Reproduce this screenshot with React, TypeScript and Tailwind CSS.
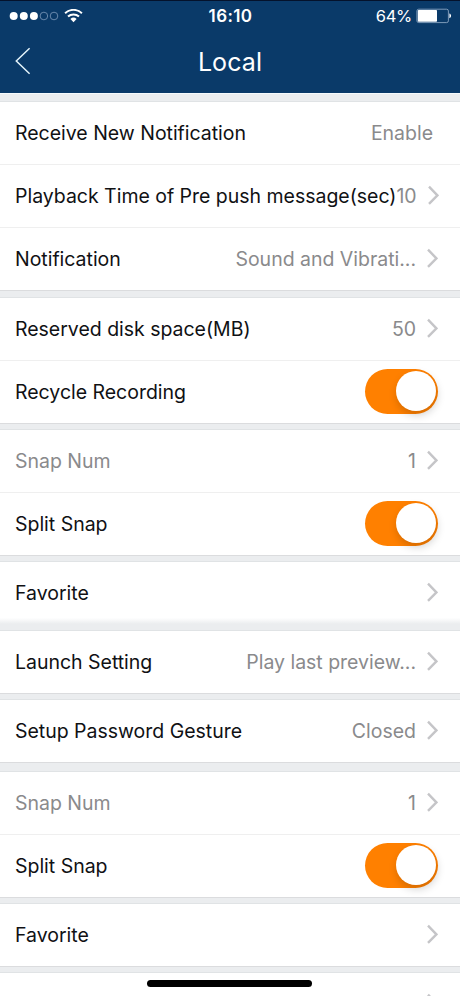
import clsx from "clsx";

interface SettingRow {
  label: string;
  value?: string;
  muted?: boolean;
  toggle?: boolean;
  chevron?: boolean;
  // bottom edge fades into the gap instead of a hairline
  softEdge?: boolean;
}

interface SettingGroup {
  id: string;
  // space above the group, without its 1px top border
  gap: string;
  rows: SettingRow[];
}

const groups: SettingGroup[] = [
  {
    id: "notifications",
    gap: "mt-[7px]",
    rows: [
      { label: "Receive New Notification", value: "Enable" },
      { label: "Playback Time of Pre push message(sec)", value: "10", chevron: true },
      { label: "Notification", value: "Sound and Vibrati...", chevron: true },
    ],
  },
  {
    id: "storage",
    gap: "mt-1.5",
    rows: [
      { label: "Reserved disk space(MB)", value: "50", chevron: true },
      { label: "Recycle Recording", toggle: true },
    ],
  },
  {
    id: "snap",
    gap: "mt-[5px]",
    rows: [
      { label: "Snap Num", value: "1", muted: true, chevron: true },
      { label: "Split Snap", toggle: true },
    ],
  },
  { id: "favorite", gap: "mt-[5px]", rows: [{ label: "Favorite", chevron: true, softEdge: true }] },
  {
    id: "launch",
    gap: "mt-[5px]",
    rows: [{ label: "Launch Setting", value: "Play last preview...", chevron: true }],
  },
  {
    id: "password",
    gap: "mt-[5px]",
    rows: [{ label: "Setup Password Gesture", value: "Closed", chevron: true }],
  },
  {
    id: "snap-2",
    gap: "mt-2",
    rows: [
      { label: "Snap Num", value: "1", muted: true, chevron: true },
      { label: "Split Snap", toggle: true },
    ],
  },
  { id: "favorite-2", gap: "mt-[5px]", rows: [{ label: "Favorite", chevron: true }] },
  { id: "last", gap: "mt-[5px]", rows: [{ label: "", chevron: true }] },
];

function StatusBar() {
  return (
    <div className="flex h-[30px] items-center border-t border-[#04122c] px-2 text-white">
      <div className="flex flex-1 items-center pl-px">
        <svg width="50" height="10" viewBox="0 0 50 10">
          <circle cx="4.7" cy="5" r="4" fill="#fff" />
          <circle cx="14.8" cy="5" r="4" fill="#fff" />
          <circle cx="24.9" cy="5" r="4" fill="#fff" />
          <circle cx="34.9" cy="5" r="3.8" fill="none" stroke="#7f9bbb" strokeWidth="0.8" />
          <circle cx="45" cy="5" r="3.8" fill="none" stroke="#7f9bbb" strokeWidth="0.8" />
        </svg>
        <svg className="ml-[5px]" width="19" height="14" viewBox="0 0 19 14" fill="none" stroke="#fff">
          <path d="M1.1 4.3a12 12 0 0 1 16.8 0" strokeWidth="2" />
          <path d="M4 7.6a8 8 0 0 1 11 0" strokeWidth="2" />
          <path d="M6.4 10a4.5 4.5 0 0 1 6.2 0L9.5 13.2z" fill="#fff" stroke="none" />
        </svg>
      </div>
      <div className="pt-0.5 text-[17px] font-semibold tracking-[0.4px]">16:10</div>
      <div className="flex flex-1 items-center justify-end">
        <span className="pt-0.5 text-[16.5px] tracking-[-0.3px]">64%</span>
        <svg className="ml-[4px]" width="36" height="16" viewBox="0 0 36 16">
          <rect x="0.9" y="1.2" width="31.5" height="13.4" rx="1.8" fill="none" stroke="#8ba5c2" strokeWidth="0.9" />
          <rect x="1.8" y="2.1" width="19.2" height="11.6" rx="0.8" fill="#fff" />
          <path d="M33.4 5.6c2.2.6 2.2 4 0 4.6z" fill="#fff" />
        </svg>
      </div>
    </div>
  );
}

function NavBar() {
  return (
    <div className="flex h-[63px] items-center justify-between px-[15px] text-white">
      <button type="button" aria-label="Back" className="w-4 pb-0.5">
        <svg width="16" height="28" viewBox="0 0 16 28" fill="none" stroke="#e3f3fa" strokeWidth="1.5">
          <path d="M14.6 1.3 1.3 14l13.3 12.7" />
        </svg>
      </button>
      <h1 className="pt-0.5 text-[25px] tracking-[0.1px]">Local</h1>
      <div className="w-4" />
    </div>
  );
}

function Toggle() {
  return (
    <button
      type="button"
      role="switch"
      aria-checked="true"
      className="flex h-[45px] w-[73px] items-center justify-end rounded-full bg-[#ff8000] pr-[2px]"
    >
      <span className="size-10 rounded-full bg-white shadow-[1px_4px_8px_rgba(0,0,0,0.18)]" />
    </button>
  );
}

function Row({ row, last }: { row: SettingRow; last: boolean }) {
  return (
    <div
      className={clsx(
        "flex h-[63px] shrink-0 items-center justify-between whitespace-nowrap border-b bg-white pb-0.5 pl-[15px] text-[19.5px] tracking-[-0.02px]",
        row.softEdge
          ? "border-[#ebedef] bg-linear-to-b from-white from-90% to-[#ebedef]"
          : last
            ? "border-[#dbdcde]"
            : "border-[#efefef]",
        row.toggle || row.chevron ? "pr-[22px]" : "pr-[27px]"
      )}
    >
      <span className={clsx("pt-1", row.muted ? "text-[#8a8a8c]" : "text-[#101114]")}>{row.label}</span>
      {row.toggle ? (
        <Toggle />
      ) : (
        <div className="flex items-center">
          {row.value && <span className="pt-1 text-[#8a8a8c]">{row.value}</span>}
          {row.chevron && (
            <svg className="ml-[11px]" width="11" height="20" viewBox="0 0 11 20" fill="none" stroke="#c5c5c8" strokeWidth="2.4">
              <path d="M1 1.7l8.4 8.6L1 18.9" />
            </svg>
          )}
        </div>
      )}
    </div>
  );
}

export default function App() {
  return (
    <div className="relative flex h-[996px] w-[460px] flex-col overflow-hidden bg-[#ebedef] font-['Inter',sans-serif]">
      <header className="shrink-0 border-b border-[#f6fafc] bg-[#0a3a69]">
        <StatusBar />
        <NavBar />
      </header>
      <main>
        {groups.map((group) => (
          <section key={group.id} className={clsx("border-t border-[#e0e3e5]", group.gap)}>
            {group.rows.map((row, i) => (
              <Row key={i} row={row} last={i === group.rows.length - 1} />
            ))}
          </section>
        ))}
      </main>
      {/* home indicator */}
      <div className="absolute bottom-[9px] left-[147px] h-[7px] w-[165px] rounded-full bg-black" />
    </div>
  );
}
